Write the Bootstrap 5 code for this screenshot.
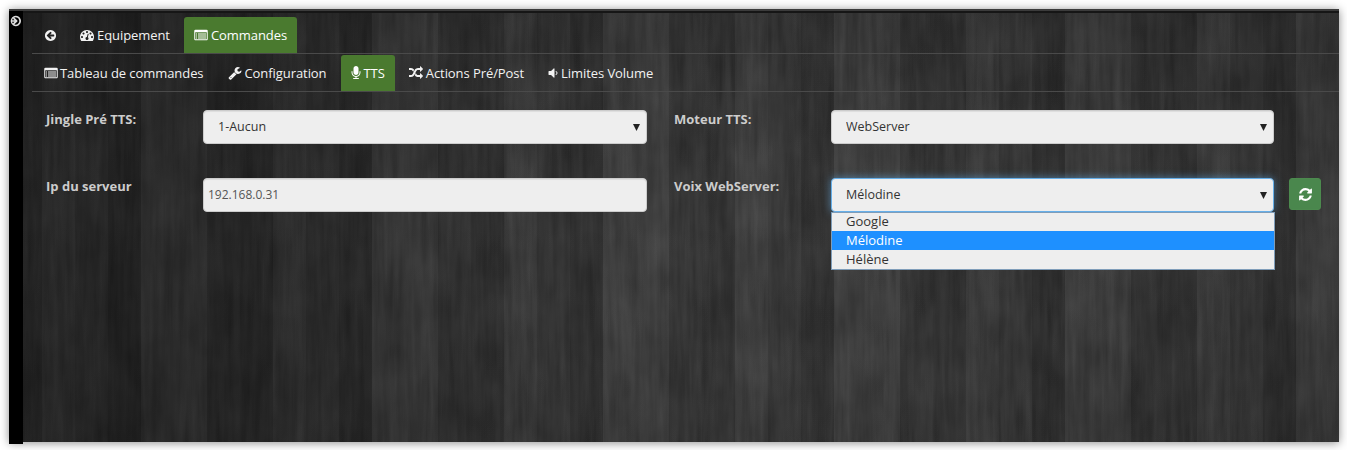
<!doctype html>
<html lang="fr">
<head>
<meta charset="utf-8">
<title>TTS</title>
<link href="https://cdn.jsdelivr.net/npm/bootstrap@5.3.0/dist/css/bootstrap.min.css" rel="stylesheet">
<style>
html,body{height:450px;overflow:hidden;background:#fff}
body{padding:9px 8px 8px 9px;font-family:"Open Sans","Liberation Sans",sans-serif;font-size:13px;color:#eee}
.shell{width:1330px;height:433px;box-shadow:0 1px 9px rgba(0,0,0,.45);background-color:#333;
background-image:
linear-gradient(90deg,rgba(0,0,0,.36) 0,rgba(0,0,0,.32) 18%,rgba(0,0,0,.1) 36%,rgba(0,0,0,0) 55%,rgba(0,0,0,.12) 100%),
linear-gradient(180deg,rgba(0,0,0,.14) 0,rgba(0,0,0,0) 45%,rgba(0,0,0,.08) 100%),
repeating-linear-gradient(90deg,rgba(0,0,0,.1) 0 33px,rgba(255,255,255,.018) 33px 66px,rgba(0,0,0,.04) 66px 99px,rgba(0,0,0,.14) 99px 132px,rgba(255,255,255,.03) 132px 198px,rgba(0,0,0,.07) 198px 231px),
url("data:image/svg+xml,%3Csvg xmlns='http://www.w3.org/2000/svg' width='1330' height='433'%3E%3Cfilter id='w' color-interpolation-filters='sRGB' x='0' y='0' width='100%25' height='100%25'%3E%3CfeTurbulence type='fractalNoise' baseFrequency='.16 .009' numOctaves='4' seed='7' result='a'/%3E%3CfeTurbulence type='fractalNoise' baseFrequency='.03 .018' numOctaves='3' seed='21' result='b'/%3E%3CfeComposite in='a' in2='b' operator='arithmetic' k1='0' k2='.5' k3='.5' k4='0'/%3E%3CfeColorMatrix values='.17 0 0 0 .15 .17 0 0 0 .15 .17 0 0 0 .15 0 0 0 0 1'/%3E%3C/filter%3E%3Crect width='1330' height='433' filter='url(%23w)'/%3E%3C/svg%3E");
border-top:2px solid #3c3c3c;position:relative}
.shell::before{content:"";display:block;height:2px;background:#161616}
.rail{width:14px;background:#000;flex:none;padding-top:4px;margin-top:-2px;color:#ddd}
.rail svg{display:block;width:12px;height:12px}
.pane{flex:1;padding:4px 0 0 9px;min-width:0}
.tabline{border-bottom:1px solid #4a4a4a;padding-left:2px;gap:4px;flex-wrap:nowrap}
.tabline .nav-link{color:#f2f2f2;padding:0 10px;height:36px;line-height:36px;font-size:13px;letter-spacing:-.07px;border-radius:3px 3px 0 0;white-space:nowrap;display:flex;align-items:center;gap:3px}
.tabline .nav-link.now{background:#4a7a2f;color:#fff}
.tabline svg{width:14px;height:14px;fill:currentColor;flex:none}
.tabline svg.ico-s{width:13px;height:13px;margin-right:-1px}
.tabline svg.ico-n{width:10px}
.tabline svg.ico-v{width:10px}
.tabline svg.ico-t{margin-right:-1px}
.tabline.second{padding-top:1px}
.fields{display:grid;grid-template-columns:157px 444px 27px 157px 443px 47px;grid-auto-rows:34px;row-gap:34px;padding:18px 0 0 14px}
.fieldname{font-weight:700;color:#ccc;font-size:13px;line-height:18px}
.fieldname.low{margin-top:-1px}
.choice,.entry{height:34px;width:100%;background-color:#eee;border:1px solid #ccc;border-radius:4px;font-size:12.5px;color:#333;box-shadow:inset 0 1px 1px rgba(0,0,0,.075);font-family:inherit}
.choice{padding:0 30px 0 14px;background-image:url("data:image/svg+xml,%3Csvg xmlns='http://www.w3.org/2000/svg' viewBox='0 0 8 7'%3E%3Cpath d='M0 0h7L3.5 7z' fill='%23222'/%3E%3C/svg%3E");background-repeat:no-repeat;background-position:right 5px center;background-size:8px 7px;appearance:none}
.entry{padding:0 3px 1px 4px;color:#555;font-size:12px}
.choice.live{border-color:#66afe9;box-shadow:0 0 8px rgba(102,175,233,.6)}
.drop{position:absolute;top:34px;left:0;width:444px;background:#eee;border:1px solid #7f9db9;color:#333;font-size:13px;z-index:5}
.drop div{height:19px;line-height:19px;padding-left:14px}
.drop div:first-child{height:18px;line-height:17px}
.drop .hit{background:#1e90ff;color:#fff}
.spin{margin-left:15px;width:32px;height:32px;background:#4a874d;border:1px solid #4c8a4e;border-radius:3px;padding:0;color:#fff;display:flex;align-items:center;justify-content:center}
.spin svg{width:15px;height:15px;fill:#fff}
</style>
</head>
<body>
<svg width="0" height="0" class="position-absolute">
<defs>
<symbol id="i-open" viewBox="0 0 1792 1792"><path d="M1285 896q0 27-18 45l-91 91-362 362q-18 18-45 18t-45-18l-91-91q-18-18-18-45t18-45l189-189h-502q-26 0-45-19t-19-45v-128q0-26 19-45t45-19h502l-189-189q-19-19-19-45t19-45l91-91q18-18 45-18t45 18l362 362 91 91q18 18 18 45zm251 0q0-148-73-273t-198-198-273-73-273 73-198 198-73 273 73 273 198 198 273 73 273-73 198-198 73-273zm256 0q0 209-103 385.5t-279.5 279.5-385.5 103-385.5-103-279.5-279.5-103-385.5 103-385.5 279.5-279.5 385.5-103 385.5 103 279.5 279.5 103 385.5z"/></symbol>
<symbol id="i-back" viewBox="0 0 1792 1792"><path d="M1408 960v-128q0-26-19-45t-45-19h-502l189-189q19-19 19-45t-19-45l-91-91q-18-18-45-18t-45 18l-362 362-91 91q-18 18-18 45t18 45l91 91 362 362q18 18 45 18t45-18l91-91q18-18 18-45t-18-45l-189-189h502q26 0 45-19t19-45zm256-64q0 209-103 385.5t-279.5 279.5-385.5 103-385.5-103-279.5-279.5-103-385.5 103-385.5 279.5-279.5 385.5-103 385.5 103 279.5 279.5 103 385.5z"/></symbol>
<symbol id="i-gauge" viewBox="0 0 1792 1792"><path d="M384 1152q0-53-37.5-90.5t-90.5-37.5-90.5 37.5-37.5 90.5 37.5 90.5 90.5 37.5 90.5-37.5 37.5-90.5zm192-448q0-53-37.5-90.5t-90.5-37.5-90.5 37.5-37.5 90.5 37.5 90.5 90.5 37.5 90.5-37.5 37.5-90.5zm428 481l101-382q6-26-7.5-48.5t-38.5-29.5-48 6.5-30 39.5l-101 382q-60 5-107 43.5t-63 98.5q-20 77 20 146t117 89 146-20 89-117q16-60-6-117t-72-91zm660-33q0-53-37.5-90.5t-90.5-37.5-90.5 37.5-37.5 90.5 37.5 90.5 90.5 37.5 90.5-37.5 37.5-90.5zm-640-640q0-53-37.5-90.5t-90.5-37.5-90.5 37.5-37.5 90.5 37.5 90.5 90.5 37.5 90.5-37.5 37.5-90.5zm448 192q0-53-37.5-90.5t-90.5-37.5-90.5 37.5-37.5 90.5 37.5 90.5 90.5 37.5 90.5-37.5 37.5-90.5zm320 448q0 261-141 483-19 29-54 29h-1402q-35 0-54-29-141-221-141-483 0-182 71-348t191-286 286-191 348-71 348 71 286 191 191 286 71 348z" fill-rule="evenodd"/></symbol>
<symbol id="i-list" viewBox="0 0 1792 1792"><path fill-rule="evenodd" d="M192 224h1408q66 0 113 47t47 113v1024q0 66-47 113t-113 47H192q-66 0-113-47t-47-113V384q0-66 47-113t113-47zm-32 320v864q0 13 9.5 22.5t22.5 9.5h1408q13 0 22.5-9.5t9.5-22.5V544zM256 704h128v128H256zm256 0h1024v128H512zM256 960h128v128H256zm256 0h1024v128H512zm-256 256h128v128H256zm256 0h1024v128H512z"/></symbol>
<symbol id="i-wrench" viewBox="0 0 1792 1792"><path d="M448 1472q0-26-19-45t-45-19-45 19-19 45 19 45 45 19 45-19 19-45zm644-420l-682 682q-37 37-90 37-52 0-91-37l-106-108q-38-36-38-90 0-53 38-91l681-681q39 98 114.5 173.5t173.5 114.5zm634-435q0 39-23 106-47 134-164.5 217.5t-258.5 83.5q-185 0-316.5-131.5t-131.5-316.5 131.5-316.5 316.5-131.5q58 0 121.5 16.5t107.5 46.5q16 11 16 28t-16 28l-293 169v224l193 107q5-3 79-48.5t135.5-81 70.5-35.5q15 0 23.5 10t8.5 25z"/></symbol>
<symbol id="i-mic" viewBox="256 0 1280 1792"><path d="M1472 704v128q0 221-147.5 384.5t-364.5 187.5v132h256q26 0 45 19t19 45-19 45-45 19h-640q-26 0-45-19t-19-45 19-45 45-19h256v-132q-217-24-364.5-187.5t-147.5-384.5v-128q0-26 19-45t45-19 45 19 19 45v128q0 185 131.5 316.5t316.5 131.5 316.5-131.5 131.5-316.5v-128q0-26 19-45t45-19 45 19 19 45zm-256-384v512q0 132-94 226t-226 94-226-94-94-226v-512q0-132 94-226t226-94 226 94 94 226z"/></symbol>
<symbol id="i-random" viewBox="0 0 1792 1792"><path d="M666 481q-60 92-137 273-22-45-37-72.5t-40.5-63.5-51-56.5-63-35-81.5-14.5h-224q-14 0-23-9t-9-23v-192q0-14 9-23t23-9h224q250 0 410 225zm1126 799q0 14-9 23l-320 320q-9 9-23 9-13 0-22.5-9.5t-9.5-22.5v-192q-32 0-85 .5t-81 1-73-1-71-5-64-10.5-63-18.5-58-28.5-59-40-55-53.5-56-69.5q59-93 136-273 22 45 37 72.5t40.5 63.5 51 56.5 63 35 81.5 14.5h256v-192q0-14 9-23t23-9q12 0 24 10l319 319q9 9 9 23zm0-896q0 14-9 23l-320 320q-9 9-23 9-13 0-22.5-9.5t-9.5-22.5v-192h-256q-48 0-87 15t-69 45-51 61.5-45 77.5q-32 62-78 171-29 66-49.5 111t-54 105-64 100-74 83-90 68.5-106.5 42-128 16.5h-224q-14 0-23-9t-9-23v-192q0-14 9-23t23-9h224q48 0 87-15t69-45 51-61.5 45-77.5q32-62 78-171 29-66 49.5-111t54-105 64-100 74-83 90-68.5 106.5-42 128-16.5h256v-192q0-14 9-23t23-9q12 0 24 10l319 319q9 9 9 23z"/></symbol>
<symbol id="i-vol" viewBox="320 0 1152 1792"><path d="M1088 352v1088q0 26-19 45t-45 19-45-19l-333-333h-262q-26 0-45-19t-19-45v-384q0-26 19-45t45-19h262l333-333q19-19 45-19t45 19 19 45zm384 544q0 76-42.5 141.5t-112.5 93.5q-10 5-25 5-26 0-45-18.5t-19-45.5q0-21 12-35.5t29-25 34-23 29-36 12-56.5-12-56.5-29-36-34-23-29-25-12-35.5q0-27 19-45.5t45-18.5q15 0 25 5 70 27 112.5 93t42.5 142z"/></symbol>
<symbol id="i-sync" viewBox="0 0 1792 1792"><path d="M1639 1056q0 5-1 7-64 268-268 434.5t-478 166.5q-146 0-282.5-55t-243.5-157l-129 129q-19 19-45 19t-45-19-19-45v-448q0-26 19-45t45-19h448q26 0 45 19t19 45-19 45l-137 137q71 66 161 102t187 36q134 0 250-65t186-179q11-17 53-117 8-23 30-23h192q13 0 22.5 9.5t9.5 22.5zm25-800v448q0 26-19 45t-45 19h-448q-26 0-45-19t-19-45 19-45l138-138q-148-137-349-137-134 0-250 65t-186 179q-11 17-53 117-8 23-30 23h-199q-13 0-22.5-9.5t-9.5-22.5v-7q65-268 270-434.5t480-166.5q146 0 284 55.5t245 156.5l130-129q19-19 45-19t45 19 19 45z"/></symbol>
</defs>
</svg>
<div class="shell">
  <div class="d-flex h-100">
    <div class="rail"><svg fill="currentColor"><use href="#i-open"/></svg></div>
    <div class="pane">
      <ul class="nav tabline">
        <li class="nav-item"><a class="nav-link" href="#"><svg class="ico-s"><use href="#i-back"/></svg></a></li>
        <li class="nav-item"><a class="nav-link" href="#"><svg><use href="#i-gauge"/></svg>Equipement</a></li>
        <li class="nav-item"><a class="nav-link now" href="#"><svg><use href="#i-list"/></svg>Commandes</a></li>
      </ul>
      <ul class="nav tabline second">
        <li class="nav-item"><a class="nav-link" href="#"><svg class="ico-t"><use href="#i-list"/></svg>Tableau de commandes</a></li>
        <li class="nav-item"><a class="nav-link" href="#"><svg><use href="#i-wrench"/></svg>Configuration</a></li>
        <li class="nav-item"><a class="nav-link now" href="#"><svg class="ico-n"><use href="#i-mic"/></svg>TTS</a></li>
        <li class="nav-item"><a class="nav-link" href="#"><svg><use href="#i-random"/></svg>Actions Pré/Post</a></li>
        <li class="nav-item"><a class="nav-link" href="#"><svg class="ico-v"><use href="#i-vol"/></svg>Limites Volume</a></li>
      </ul>
      <form class="fields">
        <label class="fieldname">Jingle Pré TTS:</label>
        <select class="choice"><option>1-Aucun</option></select>
        <span></span>
        <label class="fieldname">Moteur TTS:</label>
        <select class="choice"><option>WebServer</option></select>
        <span></span>
        <label class="fieldname low">Ip du serveur</label>
        <input class="entry" type="text" value="192.168.0.31">
        <span></span>
        <label class="fieldname low">Voix WebServer:</label>
        <div class="position-relative">
          <select class="choice live"><option>Mélodine</option></select>
          <div class="drop"><div>Google</div><div class="hit">Mélodine</div><div>Hélène</div></div>
        </div>
        <div><button class="spin" type="button"><svg><use href="#i-sync"/></svg></button></div>
      </form>
    </div>
  </div>
</div>
<script src="https://cdn.jsdelivr.net/npm/bootstrap@5.3.0/dist/js/bootstrap.bundle.min.js"></script>
</body>
</html>
